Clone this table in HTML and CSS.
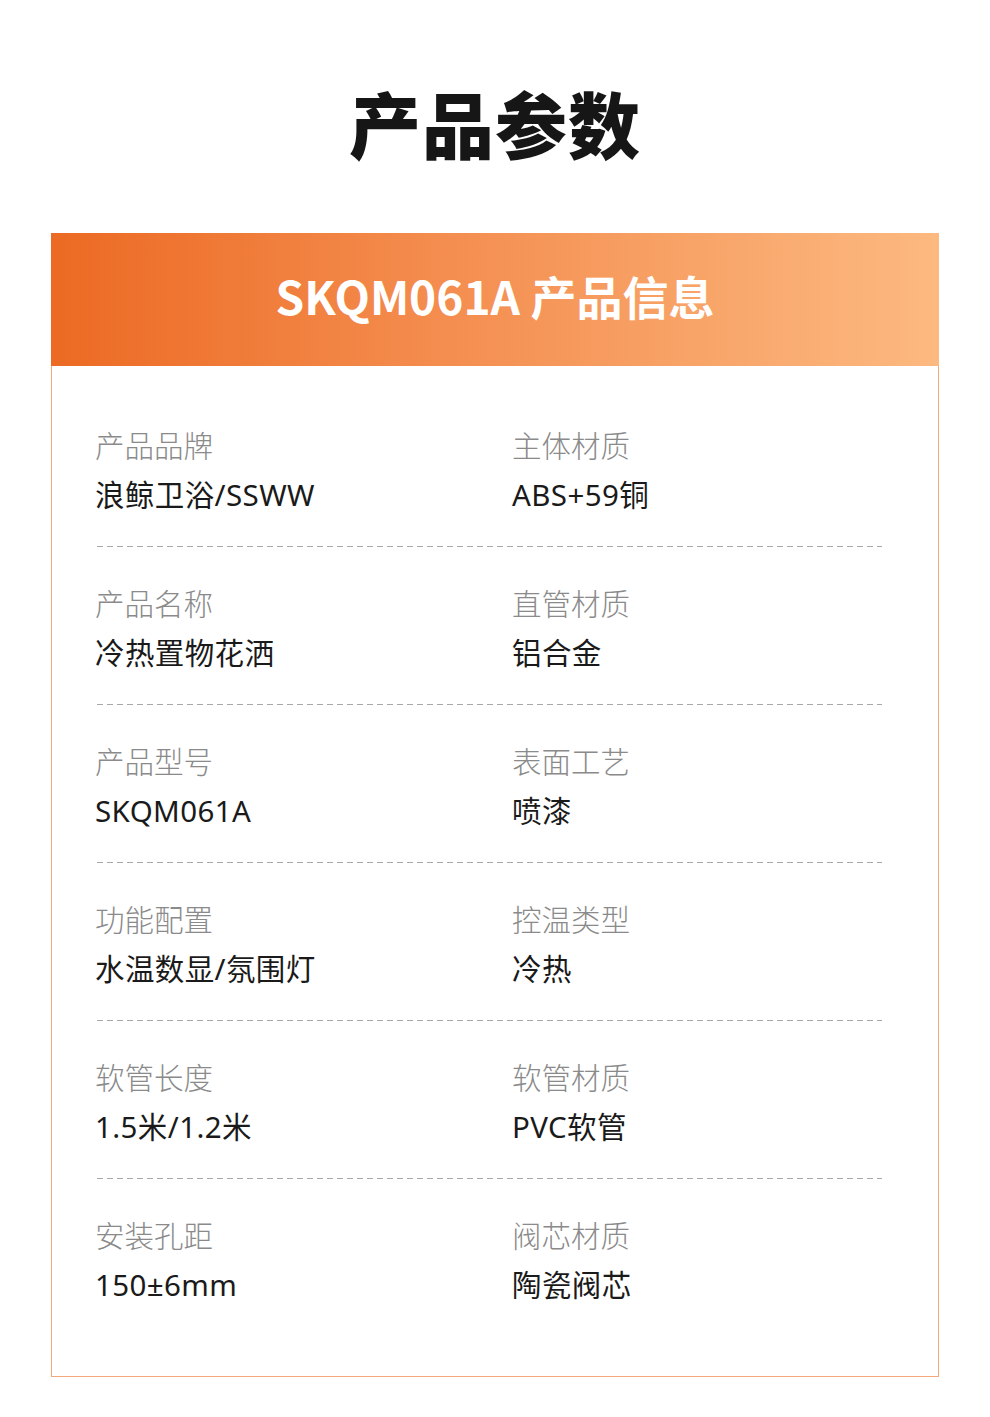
FILE: index.html
```html
<!DOCTYPE html>
<html lang="zh-CN">
<head>
<meta charset="utf-8">
<title>产品参数</title>
<link rel="stylesheet" href="styles.css">
</head>
<body>
<div class="page">
  <h1 class="title">产品参数</h1>
  <section class="card">
    <header class="card-head">SKQM061A 产品信息</header>
    <div class="card-body">
      <div class="row">
        <div class="cell"><div class="label">产品品牌</div><div class="value">浪鲸卫浴/SSWW</div></div>
        <div class="cell"><div class="label">主体材质</div><div class="value">ABS+59铜</div></div>
      </div>
      <div class="sep"></div>
      <div class="row">
        <div class="cell"><div class="label">产品名称</div><div class="value">冷热置物花洒</div></div>
        <div class="cell"><div class="label">直管材质</div><div class="value">铝合金</div></div>
      </div>
      <div class="sep"></div>
      <div class="row">
        <div class="cell"><div class="label">产品型号</div><div class="value">SKQM061A</div></div>
        <div class="cell"><div class="label">表面工艺</div><div class="value">喷漆</div></div>
      </div>
      <div class="sep"></div>
      <div class="row">
        <div class="cell"><div class="label">功能配置</div><div class="value">水温数显/氛围灯</div></div>
        <div class="cell"><div class="label">控温类型</div><div class="value">冷热</div></div>
      </div>
      <div class="sep"></div>
      <div class="row">
        <div class="cell"><div class="label">软管长度</div><div class="value">1.5米/1.2米</div></div>
        <div class="cell"><div class="label">软管材质</div><div class="value">PVC软管</div></div>
      </div>
      <div class="sep"></div>
      <div class="row">
        <div class="cell"><div class="label">安装孔距</div><div class="value">150±6mm</div></div>
        <div class="cell"><div class="label">阀芯材质</div><div class="value">陶瓷阀芯</div></div>
      </div>
    </div>
  </section>
</div>
</body>
</html>
```

FILE: styles.css
```css
* { box-sizing: border-box; }
html, body { margin: 0; padding: 0; background: #ffffff; }
body {
  font-family: "Noto Sans CJK SC", "Noto Sans", sans-serif;
  color: #1a1a1a;
}
.page {
  width: 990px;
  padding-top: 86px;
  padding-bottom: 39px;
}
.title {
  margin: 0;
  height: 75px;
  font-size: 72px;
  line-height: 72px;
  font-weight: 900;
  text-align: center;
  color: #161616;
  letter-spacing: 1px;
}
.card {
  margin: 72px 51px 0 51px;
  width: 888px;
  border: 1px solid #f5a87c;
  border-top: none;
}
.card-head {
  margin: 0 -1px;
  height: 133px;
  display: flex;
  align-items: center;
  justify-content: center;
  background: linear-gradient(90deg, #ec6a23 0%, #f48e50 45%, #fcb980 100%);
  color: #ffffff;
  font-size: 46px;
  font-weight: 700;
  padding-bottom: 10px;
}
.card-body {
  padding: 58px 56px 71px 43px;
}
.row {
  display: grid;
  grid-template-columns: 417px 1fr;
}
.cell {
  display: flex;
  flex-direction: column;
  gap: 11px;
}
.label {
  font-size: 29.5px;
  line-height: 40px;
  font-weight: 300;
  color: #8a8a8a;
}
.value {
  font-family: "Noto Sans", "Noto Sans CJK SC", sans-serif;
  font-size: 29.5px;
  line-height: 40px;
  font-weight: 400;
  letter-spacing: 0.4px;
  color: #1a1a1a;
}
.sep {
  height: 1px;
  margin: 31px 0 35px 2px;
  background: repeating-linear-gradient(90deg, #a8a8a8 0 6px, transparent 6px 10px);
}
```
